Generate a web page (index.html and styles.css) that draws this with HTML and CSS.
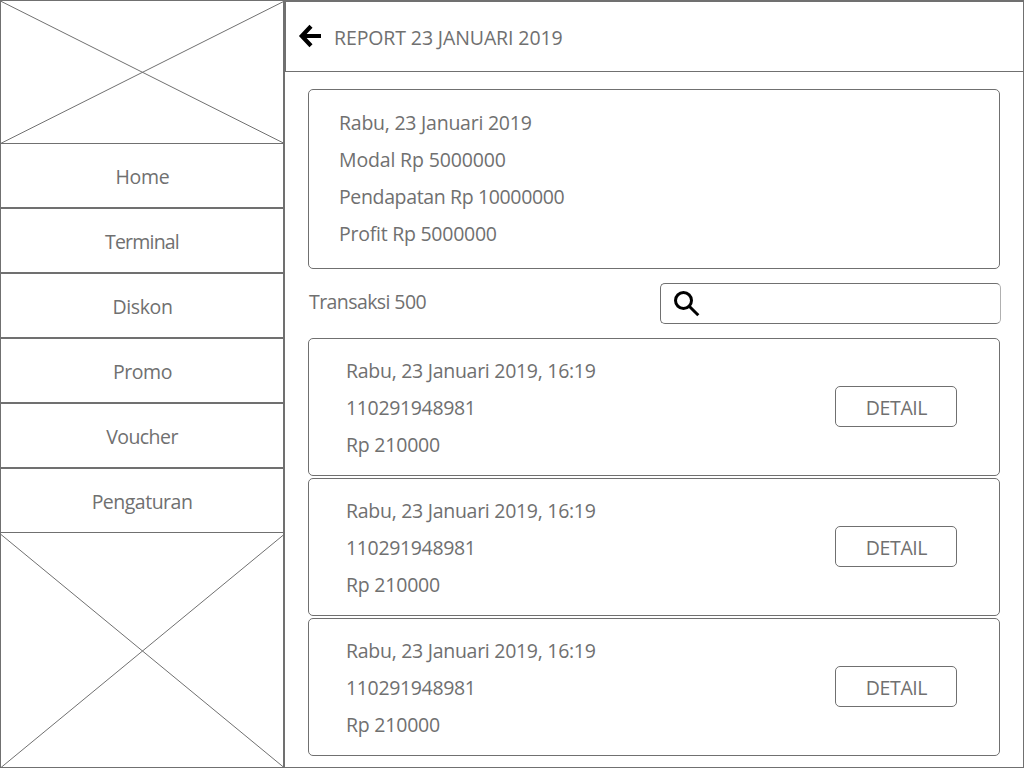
FILE: index.html
```html
<!DOCTYPE html>
<html lang="id">
<head>
<meta charset="utf-8">
<title>Report 23 Januari 2019</title>
<link rel="stylesheet" href="styles.css">
</head>
<body>
<div class="app">
  <aside class="sidebar">
    <svg class="placeholder placeholder-top" viewBox="0 0 282 142" preserveAspectRatio="none"><path d="M0 0.300L283 142.300M283 0.300L0 142.300"/></svg>
    <nav class="menu">
      <a class="menu-item"><span class="t-home">Home</span></a>
      <a class="menu-item"><span class="t-terminal">Terminal</span></a>
      <a class="menu-item"><span class="t-diskon">Diskon</span></a>
      <a class="menu-item"><span class="t-promo">Promo</span></a>
      <a class="menu-item"><span class="t-voucher">Voucher</span></a>
      <a class="menu-item"><span class="t-pengaturan">Pengaturan</span></a>
    </nav>
    <svg class="placeholder placeholder-bottom" viewBox="0 0 282 234" preserveAspectRatio="none"><path d="M0 1.500L283 234.500M283 1.500L0 234.500"/></svg>
  </aside>
  <main class="main">
    <header class="header">
      <svg class="back" viewBox="0 0 24 24"><path d="M13 2.200L3.800 12L13 21.800M4 12H23"/></svg>
      <h1 class="title">REPORT 23 JANUARI 2019</h1>
    </header>
    <div class="content">
      <section class="summary">
        <p class="t-date">Rabu, 23 Januari 2019</p>
        <p class="t-modal">Modal Rp 5000000</p>
        <p class="t-income">Pendapatan Rp 10000000</p>
        <p class="t-profit">Profit Rp 5000000</p>
      </section>
      <div class="toolbar">
        <span class="count">Transaksi 500</span>
        <div class="search"><svg class="search-icon" viewBox="0 0 26 26"><circle cx="9.500" cy="9.500" r="8"/><path d="M15.500 15.500L24.300 24.300"/></svg></div>
      </div>
      <div class="list">
        <article class="card">
          <div><p class="t-time">Rabu, 23 Januari 2019, 16:19</p><p class="t-id">110291948981</p><p class="t-total">Rp 210000</p></div>
          <button class="detail">DETAIL</button>
        </article>
        <article class="card">
          <div><p class="t-time">Rabu, 23 Januari 2019, 16:19</p><p class="t-id">110291948981</p><p class="t-total">Rp 210000</p></div>
          <button class="detail">DETAIL</button>
        </article>
        <article class="card">
          <div><p class="t-time">Rabu, 23 Januari 2019, 16:19</p><p class="t-id">110291948981</p><p class="t-total">Rp 210000</p></div>
          <button class="detail">DETAIL</button>
        </article>
      </div>
    </div>
  </main>
</div>
</body>
</html>
```

FILE: styles.css
```css
* { box-sizing: border-box; margin: 0; padding: 0; }
body {
  font-family: "Open Sans", "Noto Sans", sans-serif;
  font-size: 19.5px;
  line-height: 37px;
  color: #707070;
  background: #fff;
  white-space: nowrap;
}
.app { display: flex; width: 1024px; height: 768px; overflow: hidden; }
.sidebar {
  width: 284px; height: 768px;
  display: flex; flex-direction: column;
  border: 1px solid #707070;
}
.placeholder { display: block; width: 282px; fill: none; stroke: #707070; stroke-width: 1; }
.placeholder-top { height: 142px; }
.placeholder-bottom { height: 234px; }
.menu-item {
  display: flex; align-items: center; justify-content: center;
  height: 65px;
  padding-top: 2px;
  border-top: 1px solid #707070;
  border-bottom: 1px solid #707070;
}
.t-home { letter-spacing: -0.3px; padding-left: 1px; }
.t-terminal { letter-spacing: -0.8px; }
.t-diskon, .t-promo { letter-spacing: -0.4px; padding-left: 1px; }
.t-voucher { letter-spacing: -0.55px; }
.t-pengaturan { letter-spacing: -0.5px; }
.main {
  width: 740px; height: 768px;
  border: 1px solid #707070;
}
.header {
  display: flex; align-items: center;
  height: 71px;
  padding-left: 12px;
  border: 1px solid #707070;
  border-right: 0;
}
.back { width: 24px; height: 24px; margin-bottom: 1px; fill: none; stroke: #000; stroke-width: 4.2; }
.title { margin: 1px 0 0 12px; font-size: 19.5px; font-weight: 400; letter-spacing: -0.11px; }
.content { padding: 17px 23px 0; }
.summary {
  width: 692px; height: 180px;
  padding: 14px 30px;
  border: 1px solid #707070;
  border-radius: 5px;
}
.t-date { letter-spacing: -0.24px; }
.t-modal { letter-spacing: -0.15px; }
.t-income { letter-spacing: -0.36px; }
.t-profit { letter-spacing: -0.25px; }
.toolbar { display: flex; justify-content: space-between; width: 693px; height: 41px; margin: 14px 0; padding-left: 1px; }
.count { letter-spacing: -0.58px; }
.search {
  display: flex;
  width: 341px; height: 41px;
  padding: 7px 13px;
  border: 1px solid #707070;
  border-right-color: #b0b0b0;
  border-radius: 5px;
}
.search-icon { width: 26px; height: 26px; fill: none; stroke: #000; stroke-width: 3; }
.list { display: flex; flex-direction: column; gap: 2px; }
.card {
  display: flex; justify-content: space-between;
  width: 692px; height: 138px;
  padding: 13px 42px 0 37px;
  border: 1px solid #707070;
  border-radius: 5px;
}
.t-time { letter-spacing: -0.28px; }
.t-id { letter-spacing: -0.35px; }
.t-total { letter-spacing: -0.22px; }
.detail {
  width: 122px; height: 41px;
  margin-top: 34px;
  padding: 2px 0 0 1px;
  border: 1px solid #707070;
  border-radius: 5px;
  background: #fff;
  font: inherit;
  color: inherit;
  letter-spacing: -0.4px;
}
```
